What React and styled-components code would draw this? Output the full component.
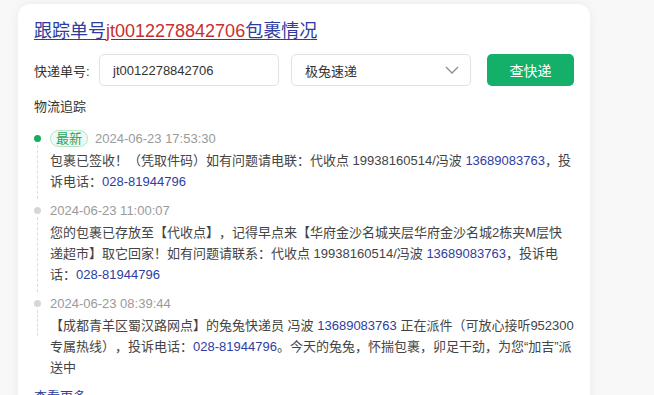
import React from "react";
import styled, { createGlobalStyle } from "styled-components";

const Global = createGlobalStyle`
  html, body { margin: 0; padding: 0; background: #f8f8f8; }
  body {
    font-family: "Liberation Sans", "Noto Sans CJK SC", sans-serif;
    color: #333;
    text-spacing-trim: space-all;
  }
`;

const Page = styled.div`
  padding: 4px 0 0 18px;
  height: 391px;
  overflow: hidden;
`;

const Card = styled.div`
  width: 540px;
  background: #fff;
  border-radius: 12px;
  box-shadow: 0 0 12px rgba(0, 0, 0, 0.06);
  padding: 15px 16px 20px;
`;

const Title = styled.a`
  display: inline-block;
  font-size: 18px;
  line-height: 24px;
  color: #2d3c9e;
  text-decoration: underline;
  text-underline-offset: 2px;
`;

const Red = styled.span`
  color: #c8302f;
`;

const Form = styled.div`
  display: flex;
  align-items: center;
  margin-top: 11px;
`;

const Label = styled.span`
  font-size: 13px;
  color: #333;
  width: 65px;
  flex: none;
`;

const Field = styled.div`
  box-sizing: border-box;
  width: ${(p) => p.$w}px;
  height: 32px;
  margin-left: ${(p) => p.$ml || 0}px;
  border: 1px solid #e2e2e2;
  border-radius: 5px;
  display: flex;
  align-items: center;
  justify-content: space-between;
  padding: 0 11px 0 13px;
  font-size: 13px;
  color: #333;
  flex: none;
`;

const Button = styled.button`
  margin-left: 16px;
  width: 87px;
  height: 32px;
  border: none;
  border-radius: 5px;
  background: #14b06a;
  color: #fff;
  font-family: inherit;
  font-size: 14px;
  cursor: pointer;
`;

const Section = styled.div`
  margin-top: 11px;
  font-size: 13px;
  line-height: 20px;
  color: #333;
`;

const Timeline = styled.div`
  margin-top: 11px;
`;

const Item = styled.div`
  display: grid;
  grid-template-columns: 16px 1fr;
  padding-bottom: ${(p) => (p.$last ? 0 : 8)}px;
`;

const Rail = styled.div`
  display: flex;
  flex-direction: column;
  align-items: flex-start;
`;

const Dot = styled.span`
  width: 7px;
  height: 7px;
  border-radius: 50%;
  margin-top: 7px;
  background: ${(p) => (p.$active ? "#15ad62" : "#d6d6d6")};
  flex: none;
`;

const Line = styled.span`
  flex: ${(p) => (p.$last ? "none" : 1)};
  height: ${(p) => (p.$last ? "26px" : "auto")};
  margin-left: 3px;
  margin-top: 3px;
  margin-bottom: ${(p) => (p.$last ? 0 : -7)}px;
  border-left: 1px dashed #dcdcdc;
`;

const Head = styled.div`
  display: flex;
  align-items: center;
  height: 20px;
  margin-bottom: 2px;
`;

const Tag = styled.span`
  box-sizing: border-box;
  height: 17px;
  padding: 0 5px;
  margin-right: 7px;
  border: 1px solid #b5e3c7;
  border-radius: 9px;
  background: #f0faf4;
  color: #29a25a;
  font-size: 13px;
  line-height: 15px;
`;

const Time = styled.span`
  font-size: 13px;
  color: #9a9a9a;
`;

const Text = styled.div`
  font-size: 13px;
  line-height: 21px;
  color: #444;
`;

const Phone = styled.span`
  color: #2f3d9f;
`;

const More = styled.a`
  display: block;
  margin-top: 9px;
  font-size: 13px;
  line-height: 20px;
  color: #2d3c9e;
`;

const Chevron = () => (
  <svg width="14" height="8" viewBox="0 0 14 8" fill="none">
    <polyline points="1,1 7,7 13,1" stroke="#8c8c8c" strokeWidth="1.3" />
  </svg>
);

const events = [
  {
    time: "2024-06-23 17:53:30",
    latest: true,
    text: (
      <>
        包裹已签收！（凭取件码）如有问题请电联：代收点 19938160514/冯波{" "}
        <Phone>13689083763</Phone>，投诉电话：<Phone>028-81944796</Phone>
      </>
    ),
  },
  {
    time: "2024-06-23 11:00:07",
    text: (
      <>
        您的包裹已存放至【代收点】，记得早点来【华府金沙名城夹层华府金沙名城2栋夹M层快递超市】取它回家！如有问题请联系：代收点
        19938160514/冯波 <Phone>13689083763</Phone>，投诉电话：
        <Phone>028-81944796</Phone>
      </>
    ),
  },
  {
    time: "2024-06-23 08:39:44",
    text: (
      <>
        【成都青羊区蜀汉路网点】的兔兔快递员 冯波 <Phone>13689083763</Phone>{" "}
        正在派件（可放心接听952300专属热线），投诉电话：
        <Phone>028-81944796</Phone>。今天的兔兔，怀揣包裹，卯足干劲，为您“加吉”派送中
      </>
    ),
  },
];

export default function App() {
  return (
    <>
      <Global />
      <Page>
        <Card>
          <Title href="#">
            跟踪单号<Red>jt0012278842706</Red>包裹情况
          </Title>
          <Form>
            <Label>快递单号:</Label>
            <Field $w={180}>jt0012278842706</Field>
            <Field $w={180} $ml={12}>
              极兔速递
              <Chevron />
            </Field>
            <Button>查快递</Button>
          </Form>
          <Section>物流追踪</Section>
          <Timeline>
            {events.map((e, i) => {
              const last = i === events.length - 1;
              return (
                <Item key={e.time} $last={last}>
                  <Rail>
                    <Dot $active={e.latest} />
                    <Line $last={last} />
                  </Rail>
                  <div>
                    <Head>
                      {e.latest && <Tag>最新</Tag>}
                      <Time>{e.time}</Time>
                    </Head>
                    <Text>{e.text}</Text>
                  </div>
                </Item>
              );
            })}
          </Timeline>
          <More href="#">查看更多</More>
        </Card>
      </Page>
    </>
  );
}
